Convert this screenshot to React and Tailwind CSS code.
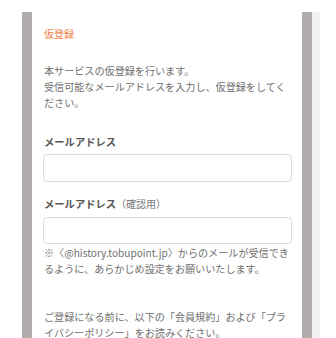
export default function App() {
  return (
    <div
      className="w-[336px] h-[338px] overflow-hidden bg-white flex pt-3"
      style={{ fontFamily: '"Noto Sans CJK JP", "Noto Sans", sans-serif' }}
    >
      <div className="w-[22px] shrink-0" />
      <div className="w-[10px] shrink-0 bg-[#b1adac]" />
      {/* Main panel */}
      <div className="w-[270px] shrink-0 bg-white pl-[11px] pr-[10px] pt-[14px]">
        <h2 className="text-[10px] leading-[15px] text-[#ef7d44] pl-[1px]">仮登録</h2>

        <p className="mt-[22px] text-[10.1px] leading-[16px] text-[#6f6f6f] pl-[1px]">
          本サービスの仮登録を行います。
          <br />
          受信可能なメールアドレスを入力し、仮登録をしてください。
        </p>

        <label className="block mt-[23px] text-[10.3px] leading-[16px] font-bold text-[#555] pl-[1px]">
          メールアドレス
        </label>
        <input
          type="email"
          className="block mt-[4px] w-[249px] h-[28px] rounded-[4px] border border-[#dcdcdc] bg-white"
        />

        <label className="block mt-[14px] text-[10.3px] leading-[16px] text-[#555] pl-[1px]">
          <span className="font-bold">メールアドレス</span>
          <span className="text-[10px] text-[#777]">（確認用）</span>
        </label>
        <input
          type="email"
          className="block mt-[5px] w-[249px] h-[27px] rounded-[4px] border border-[#dcdcdc] bg-white"
        />
        <p className="mt-[1px] text-[10.1px] leading-[16px] text-[#6f6f6f] pl-[1px]">
          ※〈@history.tobupoint.jp〉からのメールが受信できるように、あらかじめ設定をお願いいたします。
        </p>

        <p className="mt-[32px] text-[10.1px] leading-[16px] text-[#6f6f6f] pl-[1px]">
          ご登録になる前に、以下の「会員規約」および「プラ
          <br />
          イバシーポリシー」をお読みください。
        </p>
      </div>
      <div className="w-[10px] shrink-0 bg-[#b1adac]" />
      <div className="w-[8px] shrink-0 bg-[#f1f1f1]" />
    </div>
  );
}
